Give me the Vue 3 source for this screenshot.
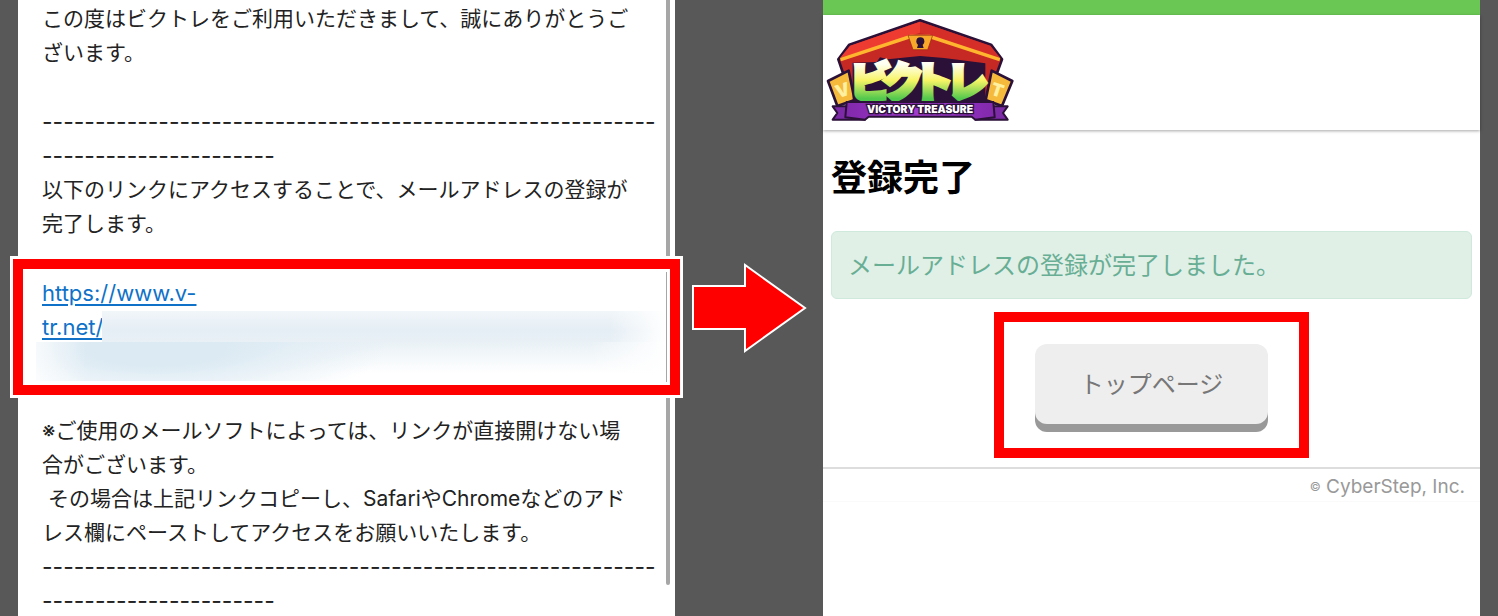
<template>
  <div class="page">
    <!-- 左：登録メール -->
    <section class="panel mail">
      <div class="scrollbar"></div>
      <p>この度はビクトレをご利用いただきまして、誠にありがとうございます。</p>
      <div class="block">
        <div class="rule">{{ rule }}</div>
        <p>以下のリンクにアクセスすることで、メールアドレスの登録が完了します。</p>
      </div>
      <div class="link-box">
        <a href="#">https://www.v-<br />tr.net/</a>
        <div class="mask mask-top"></div>
        <div class="mask mask-bottom"></div>
      </div>
      <p>※ご使用のメールソフトによっては、リンクが直接開けない場合がございます。</p>
      <p>&nbsp;その場合は上記リンクコピーし、SafariやChromeなどのアドレス欄にペーストしてアクセスをお願いいたします。</p>
      <div class="rule">{{ rule }}</div>
    </section>

    <!-- 矢印 -->
    <div class="arrow">
      <svg width="116" height="92" viewBox="0 0 116 92">
        <path d="M2 24H54V3L114 46L54 89V67H2Z" fill="#f00" stroke="#fff" stroke-width="2" />
      </svg>
    </div>

    <!-- 右：登録完了ページ -->
    <section class="panel done">
      <header class="header">
        <svg class="logo" viewBox="15 51 570 318" role="img" aria-label="ビクトレ VICTORY TREASURE">
          <defs>
            <linearGradient id="kana" gradientUnits="userSpaceOnUse" x1="0" y1="180" x2="0" y2="302">
              <stop offset="0.1" stop-color="#fffff4" />
              <stop offset="0.5" stop-color="#f8f566" />
              <stop offset="0.95" stop-color="#52c84c" />
            </linearGradient>
            <linearGradient id="ribbon" x1="0" y1="0" x2="1" y2="0">
              <stop offset="0" stop-color="#8129ac" />
              <stop offset="0.5" stop-color="#a43ad0" />
              <stop offset="1" stop-color="#8129ac" />
            </linearGradient>
          </defs>
          <g stroke="#2b1038" stroke-width="8" stroke-linejoin="round">
            <path d="M300 61L513 134L546 178L530 222V305H70V222L55 178L88 134Z" fill="#c62824" />
            <path d="M24 243L86 212L104 300L52 318Z" fill="#f5b93b" />
            <path d="M577 243L515 212L497 300L546 318Z" fill="#f5b93b" />
          </g>
          <path d="M300 65L90 137L60 174L300 98Z" fill="#ee3b31" />
          <path d="M300 65L511 137L541 174L300 98Z" fill="#d52d28" />
          <path d="M60 174L270 104H330L541 174L538 184L334 117H266L63 184Z" fill="#ffb52e" />
          <path d="M264 106H338L323 149H279Z" fill="#f8a92a" stroke="#8e2a17" stroke-width="2" />
          <circle cx="301" cy="124" r="12" fill="#2b1038" />
          <path d="M296 128H306L311 144H291Z" fill="#2b1038" />
          <text class="ticket" x="46" y="290" transform="rotate(-18 66 270)">V</text>
          <text class="ticket" x="514" y="290" transform="rotate(18 533 270)">T</text>
          <path d="M98 188L170 186L180 172L204 178L300 168L372 174L496 190V308H98Z" fill="#2b1038" />
          <text class="kana" y="291" x="90 187 276 380">ビクトレ</text>
          <g stroke="#2b1038" stroke-width="6" stroke-linejoin="round">
            <path d="M38 319H92L135 359H38L52 339Z" fill="#7d2aa7" />
            <path d="M563 319H509L466 359H563L549 339Z" fill="#7d2aa7" />
            <path d="M80 306H520L524 352L466 359L455 350H146L135 359L76 352Z" fill="url(#ribbon)" />
          </g>
          <text class="sub" x="300" y="340">VICTORY TREASURE</text>
        </svg>
      </header>

      <main class="content">
        <h1>登録完了</h1>
        <div class="alert" role="status">メールアドレスの登録が完了しました。</div>
        <div class="button-box">
          <button type="button">トップページ</button>
        </div>
      </main>

      <footer class="footer"><small>©</small> CyberStep, Inc.</footer>
    </section>
  </div>
</template>

<script setup>
const rule = '-'.repeat(80)
</script>

<style>
body {
  background: #585858;
}
</style>

<style scoped>
.page {
  display: grid;
  grid-template-columns: 1fr 148px 1fr;
  grid-template-rows: 100vh;
  padding: 0 18px;
  overflow: hidden;
  font-family: Inter, 'Noto Sans CJK JP', sans-serif;
}

.panel {
  position: relative;
  min-width: 0;
  background: #fff;
}

.mail {
  padding: 2px 18px 0 24px;
  color: #222;
  font-size: 21px;
  line-height: 34px;
}

.mail p {
  margin: 0;
  padding-right: 16px;
}

.block {
  margin-top: 35px;
}

.rule {
  font-size: 23px;
  overflow-wrap: anywhere;
}

.scrollbar {
  position: absolute;
  top: 0;
  right: 5px;
  width: 4px;
  height: 585px;
  border-radius: 0 0 2px 2px;
  background: #a6a6a6;
}

/* 赤枠 */
.link-box {
  position: relative;
  margin: 18px -23px 19px -29px;
  padding: 7px 19px 41px;
  border: 10px solid #f00;
  box-shadow: 0 0 0 3px #fff, inset 0 0 0 3px #fff;
  font-size: 22px;
}

.link-box a {
  color: #0f72c8;
  text-decoration: underline;
  text-underline-offset: 3px;
}

/* URLのぼかし */
.mask {
  position: absolute;
  right: 4px;
}

.mask-top {
  top: 42px;
  left: 79px;
  height: 32px;
  background: linear-gradient(to right, transparent 90%, #fff), linear-gradient(#f1f6f9, #e5eef5 60%, #e9f1f6);
}

.mask-bottom {
  top: 73px;
  left: 13px;
  height: 39px;
  background: linear-gradient(to right, rgba(255, 255, 255, 0.7), transparent 8%, transparent 88%, #fff), radial-gradient(ellipse 230px 60px at 120px 6px, #dceaf3 30%, transparent), linear-gradient(#e9f1f6, #fff 80%);
}

.arrow {
  display: flex;
  align-items: center;
  justify-content: center;
}

.done {
  border-top: 15px solid #6ac754;
}

.header {
  height: 115px;
  box-sizing: border-box;
  padding: 2px;
  box-shadow: 0 1px 3px rgba(0, 0, 0, 0.35);
}

.logo {
  display: block;
  width: 190px;
  height: 106px;
}

.kana {
  font-family: 'Noto Sans CJK JP', sans-serif;
  font-size: 124px;
  font-weight: 900;
  fill: url(#kana);
  stroke: url(#kana);
  stroke-width: 12px;
}

.ticket {
  font-size: 54px;
  font-weight: 900;
  fill: #fff0a0;
}

.sub {
  font-size: 31px;
  font-weight: 900;
  text-anchor: middle;
  fill: #fff;
  stroke: #2b1038;
  stroke-width: 8px;
  paint-order: stroke;
}

.content {
  padding: 21px 8px 9px;
}

h1 {
  margin: 0 0 26px;
  color: #000;
  font-size: 36px;
  line-height: 54px;
}

.alert {
  padding: 17px 16px 15px;
  border: 1px solid #cfe9dc;
  border-radius: 6px;
  background: #e0f0e7;
  color: #68ae94;
  font-size: 24px;
  line-height: 34px;
}

.button-box {
  width: fit-content;
  margin: 13px auto 0;
  padding: 22px 31px 24px;
  border: 10px solid #f00;
}

button {
  width: 233px;
  height: 80px;
  display: block;
  padding: 0 0 4px;
  border: none;
  border-radius: 12px;
  background: #eee;
  box-shadow: 0 8px 0 #999;
  color: #777;
  font-family: inherit;
  font-size: 24px;
  cursor: pointer;
}

.footer {
  padding: 4px 15px 0;
  border-top: 2px solid #ddd;
  border-bottom: 1px solid #fafafa;
  color: #999;
  font-size: 19px;
  line-height: 28px;
  text-align: right;
}

.footer small {
  font-size: 12px;
  vertical-align: 2px;
}
</style>
